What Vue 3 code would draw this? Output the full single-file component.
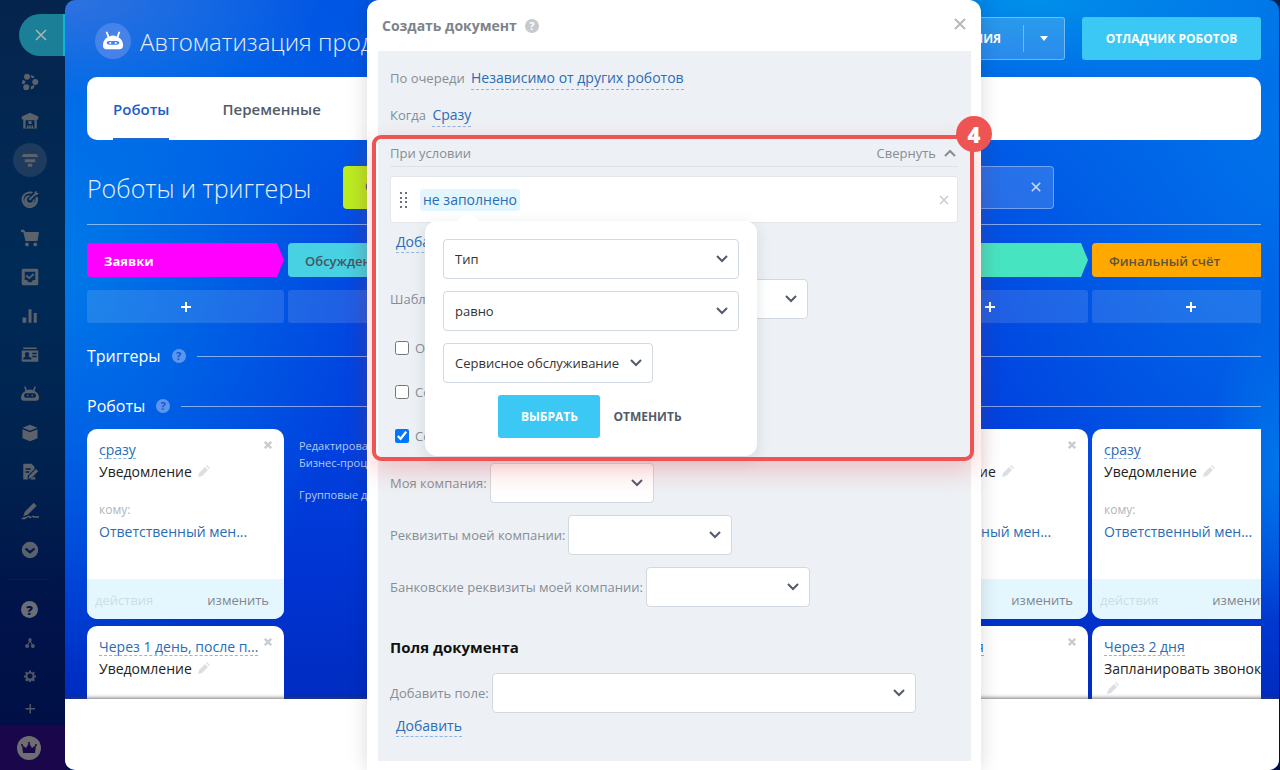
<script setup>
import { ref } from 'vue'

const navItems = [
  { name: 'Сотрудничество', d: 'M8 1a4 4 0 1 1 0 8 4 4 0 0 1 0-8zM19 8a4 4 0 1 1 0 8 4 4 0 0 1 0-8zM7 15a4 4 0 1 1 0 8 4 4 0 0 1 0-8zM3 9l3 2-1 3-3 1-1-3zM13 3l4 1 1 2-3 1-2-2zM13 18l4-2 1 2-2 3-3 1z' },
  { name: 'Магазин', d: 'M12 1l11 5v4h-2v12H3V10H1V6zM6 11v10h2v-3h2v3h1v-3h2v3h1v-3h2v3h2V11zM10 12h4v4h-4z' },
  { name: 'CRM', active: true, d: 'M1 4h22v4H1zM5 11h14v4H5zM9 17h6v4H9z' },
  { name: 'Маркетинг', d: 'M11 2c2 0 3 0 5 1l-2 2a8 8 0 1 0 5 5l3-1a11 11 0 1 1-11-7zM11 7l1 2a4 4 0 1 0 4 4l2-1a7 7 0 1 1-7-5zM10 12l8-7V3l3-2v3h3l-3 3h-2l-7 7z' },
  { name: 'Каталог', d: 'M0 1h4l2 3h18l-2 12H6L3 4H0zM8 18a2 2 0 1 1 0 5 2 2 0 0 1 0-5zM19 18a2 2 0 1 1 0 5 2 2 0 0 1 0-5z' },
  { name: 'Задачи', d: 'M3 1h18q2 0 2 2v18q0 2-2 2H3q-2 0-2-2V3q0-2 2-2zM5 5v11h3l2 3h4l2-3h3V5zM8 9l3 3 5-5 2 2-7 6-5-4z' },
  { name: 'Аналитика', d: 'M2 14h5v7H2zM10 3h4v18h-4zM17 8h4v13h-4z' },
  { name: 'Контакты', d: 'M3 2h18v2H3zM1 6h22v15H1zM8 8q-3 0-3 3l1 3-3 2v2h11v-2l-4-2 1-3q0-3-3-3zM15 9v2h6V9zM15 13v2h6v-2z' },
  { name: 'Роботы', d: 'M4 2h2l2 5q4-2 8 0l2-5h2l-2 6q6 3 6 9 0 4-4 4H4q-4 0-4-4 0-6 6-9zM7 11q-3 0-3 3t3 3h10q3 0 3-3t-3-3zM8 13h2v2H8zM14 13h2v2h-2z' },
  { name: 'Склад', d: 'M12 1l10 4-10 4L2 5zM2 7l10 4 10-4v12l-10 4-10-4z' },
  { name: 'Документы', d: 'M3 1h11l4 4v3l-9 9v5H3zM6 7v2h7V7zM6 11v2h5v-2zM20 8l3 3-9 9-4 1 1-4zM16 19h3v3h-7z' },
  { name: 'Подпись', d: 'M17 1l4 4-12 12-6 2 2-6zM1 21l5-1 5-2 2 2 3-2 2 1h6v2h-7l-2-1-3 2-2-2-5 3H1z' },
  { name: 'Ещё', d: 'M12 1a11 11 0 1 1 0 22 11 11 0 0 1 0-22zM7 9l-2 2 7 6 7-6-2-2-5 4z' }
]

const toolItems = [
  { name: 'Карта сайта', d: 'M12 2a4 4 0 0 1 2 7l3 5a4 4 0 1 1-2 1l-3-5-3 5a4 4 0 1 1-2-1l3-5a4 4 0 0 1 2-7z' },
  { name: 'Настройки', d: 'M10 1h4v3l3 1 2-2 3 3-2 2 1 3h3v4h-3l-1 2 2 3-3 3-3-2-2 1v2h-4v-2l-2-1-3 2-3-3 2-3-1-2H0v-4h3l1-3-2-2 3-3 2 2 3-1zM12 7a5 5 0 1 0 0 10 5 5 0 0 0 0-10z' },
  { name: 'Добавить', d: 'M11 2h3v8h8v3h-8v8h-3v-8H3v-3h8z' }
]

const stages = [
  { title: 'Заявки', color: 'magenta' },
  { title: 'Обсуждение', color: 'cyan' },
  { title: 'Смета', color: 'cyan' },
  { title: 'Договор', color: 'green' },
  { title: 'Оплата', color: 'green' },
  { title: 'Финальный счёт', color: 'orange' }
]

const notice = { when: 'сразу', title: 'Уведомление', to: 'Ответственный мен...' }

const columns = [
  { robots: [notice, { when: 'Через 1 день, после п...', title: 'Уведомление' }] },
  { notes: ['Редактировать', 'Бизнес-процессы', 'Групповые действия'] },
  { robots: [] },
  { robots: [] },
  { robots: [notice, { when: 'Через 2 дня', title: 'Задание' }] },
  { robots: [notice, { when: 'Через 2 дня', title: 'Запланировать звонок' }] }
]

const options = ref([
  { label: 'Обновить документ', checked: false },
  { label: 'Создать ссылку', checked: false },
  { label: 'Собрать в PDF', checked: true }
])

const companyFields = [
  { id: 'company', label: 'Моя компания:' },
  { id: 'requisites', label: 'Реквизиты моей компании:' },
  { id: 'bank', label: 'Банковские реквизиты моей компании:' }
]

const conditionFields = [
  { value: 'Тип', name: 'Поле' },
  { value: 'равно', name: 'Условие' },
  { value: 'Сервисное обслуживание', name: 'Значение', fit: true }
]
</script>

<template>
  <div class="shell">
    <aside class="sidebar">
      <button class="slider-close" aria-label="Закрыть">
        <svg viewBox="0 0 12 12" width="12" height="12"><path d="M1 1l10 10M11 1L1 11" /></svg>
      </button>
      <nav class="nav">
        <a v-for="item in navItems" :key="item.name" href="#" class="nav-item" :class="{ active: item.active }" :aria-label="item.name">
          <svg viewBox="0 0 24 24"><path :d="item.d" /></svg>
        </a>
      </nav>
      <div class="tools">
        <button class="tool help" aria-label="Помощь">?</button>
        <button v-for="tool in toolItems" :key="tool.name" class="tool" :aria-label="tool.name">
          <svg viewBox="0 0 24 24"><path :d="tool.d" /></svg>
        </button>
      </div>
      <div class="premium">
        <svg viewBox="0 0 24 24" width="24" height="24">
          <circle cx="12" cy="12" r="12" />
          <path d="M5 9l4 3 3-5 3 5 4-3-1 8H6z" />
          <g><circle cx="5" cy="9" r="1" /><circle cx="12" cy="7" r="1" /><circle cx="19" cy="9" r="1" /></g>
        </svg>
      </div>
    </aside>

    <main class="main">
      <div class="workspace">
        <header class="header">
          <span class="robot-logo">
            <svg viewBox="0 0 24 24" width="22" height="22">
              <path fill-rule="evenodd" d="M4 2h2l2 5q4-2 8 0l2-5h2l-2 6q5 3 5 9 0 4-4 4H5q-4 0-4-4 0-6 5-9zM8 12q-3 0-3 2t3 2h8q3 0 3-2t-3-2zM8 13h2v2H8zM14 13h2v2h-2z" />
            </svg>
          </span>
          <h1>Автоматизация продаж</h1>
          <div class="split-button">
            <button class="split-main">РЕШЕНИЯ</button>
            <button class="split-caret" aria-label="Открыть меню"><i></i></button>
          </div>
          <button class="debug-button">ОТЛАДЧИК РОБОТОВ</button>
        </header>

        <nav class="tabs">
          <a href="#" class="tab current">Роботы</a>
          <a href="#" class="tab">Переменные</a>
        </nav>

        <div class="toolbar">
          <h2>Роботы и триггеры</h2>
          <button class="create-button">СОЗДАТЬ</button>
          <div class="filter">
            <button aria-label="Сбросить">
              <svg viewBox="0 0 12 12" width="10" height="10"><path d="M1 1l10 10M11 1L1 11" /></svg>
            </button>
          </div>
        </div>

        <div class="board">
          <div class="lane">
            <div v-for="stage in stages" :key="stage.title" class="stage" :class="stage.color">{{ stage.title }}</div>
          </div>
          <div class="lane adders">
            <button v-for="stage in stages" :key="stage.title" class="adder" :aria-label="'Добавить: ' + stage.title">
              <svg viewBox="0 0 10 10" width="10" height="10"><path d="M5 0v10M0 5h10" /></svg>
            </button>
          </div>

          <h3 class="section-title">Триггеры <span class="hint">?</span></h3>
          <h3 class="section-title robots-title">Роботы <span class="hint">?</span></h3>

          <div class="lane">
            <div v-for="(column, i) in columns" :key="i" class="column">
              <ul v-if="column.notes" class="notes">
                <li v-for="note in column.notes" :key="note">{{ note }}</li>
              </ul>
              <article v-for="robot in column.robots" :key="robot.when" class="robot">
                <button class="robot-remove" aria-label="Удалить">
                  <svg viewBox="0 0 10 10" width="8" height="8"><path d="M1 1l8 8M9 1L1 9" /></svg>
                </button>
                <div class="robot-body">
                  <a href="#" class="robot-when">{{ robot.when }}</a>
                  <p class="robot-title">
                    {{ robot.title }}
                    <svg class="pencil" viewBox="0 0 12 12" width="12" height="12"><path d="M0 12l1-4 6-6 3 3-6 6zM8 1l1-1 3 3-1 1z" /></svg>
                  </p>
                  <template v-if="robot.to">
                    <p class="robot-label">кому:</p>
                    <a href="#" class="robot-to">{{ robot.to }}</a>
                  </template>
                </div>
                <footer v-if="robot.to" class="robot-footer">
                  <span>действия</span>
                  <a href="#">изменить</a>
                </footer>
              </article>
            </div>
          </div>
        </div>
      </div>
      <footer class="bottom-bar"></footer>

      <div class="overlay">
        <section class="dialog">
          <header class="dialog-header">
            <h2>Создать документ</h2>
            <span class="hint gray">?</span>
            <button class="dialog-close" aria-label="Закрыть">
              <svg viewBox="0 0 12 12" width="12" height="12"><path d="M1 1l10 10M11 1L1 11" /></svg>
            </button>
          </header>

          <div class="dialog-body">
            <div class="settings">
              <p class="setting">По очереди <a href="#" class="dashed">Независимо от других роботов</a></p>
              <p class="setting">Когда <a href="#" class="dashed">Сразу</a></p>
            </div>

            <div class="conditions">
              <div class="conditions-head">
                <span>При условии</span>
                <button>
                  Свернуть
                  <svg viewBox="0 0 12 8" width="12" height="8"><path d="M1 7l5-5 5 5" /></svg>
                </button>
              </div>
              <div class="condition">
                <svg class="grip" viewBox="0 0 8 16" width="8" height="16">
                  <path d="M0 0h2v2H0zM5 0h2v2H5zM0 5h2v2H0zM5 5h2v2H5zM0 9h2v2H0zM5 9h2v2H5zM0 14h2v2H0zM5 14h2v2H5z" />
                </svg>
                <a href="#">не заполнено</a>
                <button aria-label="Удалить условие">
                  <svg viewBox="0 0 10 10" width="10" height="10"><path d="M1 1l8 8M9 1L1 9" /></svg>
                </button>
              </div>
              <a href="#" class="dashed add-link">Добавить условие</a>

              <div class="field template-field">
                <label for="template">Шаблон:</label>
                <span class="select wide">
                  <select id="template"><option></option></select>
                  <svg viewBox="0 0 12 8" width="12" height="8"><path d="M1 1l5 5 5-5" /></svg>
                </span>
              </div>

              <div class="options">
                <label v-for="option in options" :key="option.label">
                  <input v-model="option.checked" type="checkbox" />
                  {{ option.label }}
                </label>
              </div>

              <div class="popup">
                <span v-for="field in conditionFields" :key="field.name" class="select" :class="{ fit: field.fit }">
                  <select :aria-label="field.name"><option>{{ field.value }}</option></select>
                  <svg viewBox="0 0 12 8" width="12" height="8"><path d="M1 1l5 5 5-5" /></svg>
                </span>
                <div class="popup-actions">
                  <button class="primary">ВЫБРАТЬ</button>
                  <button class="plain">ОТМЕНИТЬ</button>
                </div>
              </div>

              <div class="frame"></div>
              <span class="step">4</span>
            </div>

            <div class="fields">
              <div v-for="field in companyFields" :key="field.id" class="field">
                <label :for="field.id">{{ field.label }}</label>
                <span class="select short">
                  <select :id="field.id"><option></option></select>
                  <svg viewBox="0 0 12 8" width="12" height="8"><path d="M1 1l5 5 5-5" /></svg>
                </span>
              </div>
              <h3>Поля документа</h3>
              <div class="field new-field">
                <label for="new-field">Добавить поле:</label>
                <span class="select long">
                  <select id="new-field"><option></option></select>
                  <svg viewBox="0 0 12 8" width="12" height="8"><path d="M1 1l5 5 5-5" /></svg>
                </span>
              </div>
              <a href="#" class="dashed add-link">Добавить</a>
            </div>
          </div>
        </section>
      </div>
    </main>
  </div>
</template>

<style>
body {
  margin: 0;
  background: #042650;
}
</style>

<style scoped>
* {
  box-sizing: border-box;
}

.shell {
  display: flex;
  height: 100vh;
  overflow: hidden;
  font-family: 'Open Sans', 'Noto Sans', sans-serif;
  font-size: 14px;
  line-height: 20px;
  background: linear-gradient(180deg, #05244d 0, #002b57 35%, #00224f 60%, #00134a 80%, #000f45 100%);
}

h1, h2, h3, p, ul {
  margin: 0;
  padding: 0;
  list-style: none;
}

a {
  color: #2a6cb5;
  text-decoration: none;
}

button {
  border: 0;
  padding: 0;
  background: none;
  font: inherit;
  color: inherit;
  cursor: pointer;
}

svg {
  display: block;
  flex: none;
}

/* sidebar */
.sidebar {
  display: flex;
  flex-direction: column;
  flex: none;
  width: 65px;
}

.slider-close {
  display: flex;
  align-items: center;
  align-self: flex-end;
  flex: none;
  width: 46px;
  height: 42px;
  margin: 14px 0 6px;
  padding-left: 16px;
  border-right: 2px solid #10b4d4;
  border-radius: 21px 0 0 21px;
  background: #1b7f97;
}

.slider-close path {
  stroke: #a9b5b5;
  stroke-width: 1.5;
}

.nav-item {
  display: flex;
  align-items: center;
  justify-content: center;
  width: 59px;
  height: 39px;
}

.nav-item svg {
  width: 18px;
  height: 18px;
  fill: #5c626b;
  fill-rule: evenodd;
}

.nav-item.active svg {
  width: 34px;
  height: 34px;
  padding: 8px;
  border-radius: 50%;
  background: #1e3a5d;
}

.tools {
  display: flex;
  flex-direction: column;
  align-items: center;
  width: 41px;
  margin: 10px 0 0 9px;
  padding-top: 13px;
  border-top: 1px solid #061d50;
}

.tool {
  display: flex;
  align-items: center;
  justify-content: center;
  height: 33px;
}

.tool svg {
  width: 12px;
  height: 12px;
  fill: #4f5666;
  fill-rule: evenodd;
}

.tool.help {
  width: 17px;
  height: 17px;
  margin: 8px 0;
  border-radius: 50%;
  background: #6b6e75;
  color: #001449;
  font-size: 13px;
  font-weight: 800;
}

.premium {
  display: flex;
  align-items: center;
  flex: none;
  height: 45px;
  margin-top: auto;
  padding-left: 17px;
  background: #1a064b;
}

.premium circle {
  fill: #6e6e70;
}

.premium path,
.premium g circle {
  fill: #1a064b;
}

/* workspace */
.main {
  position: relative;
  display: flex;
  flex-direction: column;
  flex: 1;
  min-width: 0;
  margin-right: 1px;
  overflow: hidden;
  border-radius: 10px;
  background:
    radial-gradient(ellipse 340px 110px at 80% 0, #0090ea, rgba(0, 144, 234, 0)),
    radial-gradient(ellipse 340px 560px at 100% 16%, #0072ea, rgba(0, 114, 234, 0)),
    radial-gradient(ellipse 70px 160px at 100% 60%, #0078e9, rgba(0, 120, 233, 0)),
    radial-gradient(ellipse 260px 100px at 0 0, #2f72df, rgba(47, 114, 223, 0)),
    radial-gradient(ellipse 300px 420px at 0 34%, #0079e8, rgba(0, 121, 232, 0)),
    linear-gradient(180deg, #0056e4 0, #005ae6 15%, #0048e2 34%, #0041df 58%, #0034d2 75%, #002cc0 91%);
}

.workspace {
  flex: 1;
  min-height: 0;
  padding: 0 18px 0 22px;
  overflow: hidden;
}

.bottom-bar {
  position: relative;
  flex: none;
  height: 71px;
  background: #fff;
  box-shadow: 0 -1px 4px rgba(60, 60, 70, 0.7);
}

.header {
  display: flex;
  align-items: center;
  height: 77px;
  padding-left: 8px;
}

.robot-logo {
  display: flex;
  align-items: center;
  justify-content: center;
  width: 36px;
  height: 36px;
  margin-top: 4px;
  border-radius: 50%;
  background: #4583e8;
}

.robot-logo path {
  fill: #fff;
}

.header h1 {
  flex: 1;
  margin: 6px 0 0 9px;
  color: #e6effc;
  font-size: 24px;
  line-height: 32px;
  font-weight: 300;
  white-space: nowrap;
}

.split-button {
  display: flex;
  height: 43px;
  margin-right: 17px;
  border: 1px solid rgba(255, 255, 255, 0.35);
  border-radius: 3px;
  background: rgba(255, 255, 255, 0.16);
  color: #fff;
  font-size: 12px;
  font-weight: 700;
}

.split-main {
  width: 140px;
  margin: 7px 0;
  padding-right: 22px;
  border-right: 1px solid rgba(255, 255, 255, 0.35);
  text-align: right;
}

.split-caret {
  display: flex;
  align-items: center;
  justify-content: center;
  width: 40px;
}

.split-caret i {
  border: 4px solid transparent;
  border-top: 5px solid #fff;
  border-bottom: 0;
}

.debug-button {
  width: 179px;
  height: 43px;
  border-radius: 3px;
  background: #3bc8f5;
  color: #fff;
  font-size: 12px;
  font-weight: 700;
}

.tabs {
  display: flex;
  gap: 53px;
  height: 63px;
  padding: 0 26px;
  border-radius: 10px;
  background: #fff;
}

.tab {
  display: flex;
  align-items: center;
  padding-top: 2px;
  border-bottom: 2px solid transparent;
  color: #525c69;
  font-size: 15px;
  font-weight: 600;
}

.tab.current {
  border-color: #2067d0;
  color: #1e5cc8;
}

.toolbar {
  display: flex;
  align-items: center;
  height: 85px;
  padding-top: 10px;
  border-bottom: 1px solid rgba(255, 255, 255, 0.5);
}

.toolbar h2 {
  width: 256px;
  padding-top: 2px;
  color: #e6effc;
  font-size: 25px;
  line-height: 36px;
  font-weight: 300;
  white-space: nowrap;
}

.create-button {
  width: 150px;
  height: 43px;
  padding-left: 22px;
  border-radius: 4px;
  background: #bbed21;
  color: #535c69;
  font-size: 12px;
  font-weight: 700;
  text-align: left;
}

.filter {
  display: flex;
  justify-content: flex-end;
  flex: 1;
  height: 43px;
  margin: 0 207px 0 12px;
  padding-right: 12px;
  border: 1px solid rgba(255, 255, 255, 0.35);
  border-radius: 4px;
  background: rgba(255, 255, 255, 0.15);
}

.filter path {
  stroke: #bdd4f7;
  stroke-width: 2;
}

.board {
  padding-top: 18px;
}

.lane {
  display: grid;
  grid-auto-flow: column;
  grid-auto-columns: 197px;
  gap: 4px;
  overflow: hidden;
}

.stage {
  height: 34px;
  padding: 0 17px;
  border-radius: 4px;
  clip-path: polygon(0 0, calc(100% - 7px) 0, 100% 50%, calc(100% - 7px) 100%, 0 100%);
  color: #45545f;
  font-size: 13px;
  line-height: 36px;
  font-weight: 600;
}

.stage.magenta {
  background: #ff00ff;
  color: #fff;
  font-weight: 700;
}

.stage.cyan {
  background: #47d1e2;
}

.stage.green {
  background: #47e4c2;
}

.stage.orange {
  background: #ffa900;
  color: #5f553c;
}

.adders {
  margin: 13px 0 21px;
}

.adder {
  display: flex;
  align-items: center;
  justify-content: center;
  height: 33px;
  border-radius: 3px;
  background: rgba(255, 255, 255, 0.12);
}

.adder path {
  stroke: #fff;
  stroke-width: 2;
}

.section-title {
  display: flex;
  align-items: center;
  gap: 11px;
  height: 24px;
  color: #fff;
  font-size: 16px;
  font-weight: 400;
}

.section-title::after {
  content: '';
  flex: 1;
  height: 1px;
  background: rgba(255, 255, 255, 0.5);
}

.robots-title {
  margin: 26px 0 11px;
}

.hint {
  width: 14px;
  height: 14px;
  border-radius: 50%;
  background: #5c95ee;
  color: #1456cf;
  font-size: 11px;
  line-height: 14px;
  font-weight: 700;
  text-align: center;
}

.hint.gray {
  background: #c6cace;
  color: #fff;
}

.column {
  display: flex;
  flex-direction: column;
  gap: 7px;
}

.notes {
  padding: 8px 11px;
  color: #b4c9f8;
  font-size: 11px;
  line-height: 17px;
}

.notes li:last-child {
  margin-top: 15px;
}

.robot {
  position: relative;
  display: flex;
  flex-direction: column;
  height: 190px;
  overflow: hidden;
  border-radius: 10px;
  background: #fff;
}

.robot-body {
  flex: 1;
  padding: 11px 12px;
  font-size: 14px;
}

.robot-when {
  display: inline-block;
  border-bottom: 1px dashed #8fb6e0;
  line-height: 17px;
  white-space: nowrap;
}

.robot-title {
  margin-top: 2px;
  color: #222;
  line-height: 20px;
}

.pencil {
  display: inline-block;
  margin-left: 3px;
  fill: #dcdfe1;
}

.robot-label {
  margin-top: 18px;
  color: #b0b5bd;
  font-size: 12px;
}

.robot-to {
  line-height: 24px;
  white-space: nowrap;
}

.robot-remove {
  position: absolute;
  top: 12px;
  right: 12px;
}

.robot-remove path {
  stroke: #c8cdd1;
  stroke-width: 3;
}

.robot-footer {
  display: flex;
  align-items: center;
  justify-content: space-between;
  height: 40px;
  padding: 2px 15px 0 8px;
  background: #e5f7fe;
  color: #ccdde3;
  font-size: 13px;
}

.robot-footer a {
  color: #80868e;
}

/* dialog */
.overlay {
  position: absolute;
  inset: 0;
  display: flex;
  justify-content: center;
  padding-left: 4px;
}

.dialog {
  width: 614px;
  border-radius: 12px 12px 0 0;
  background: #fff;
  box-shadow: 0 0 20px rgba(0, 0, 0, 0.15);
}

.dialog-header {
  display: flex;
  align-items: center;
  gap: 8px;
  height: 51px;
  padding: 0 15px;
}

.dialog-header h2 {
  color: #7d838b;
  font-size: 14px;
  font-weight: 700;
}

.dialog-close {
  margin: 0 0 4px auto;
}

.dialog-close path {
  stroke: #b5babf;
  stroke-width: 2;
}

.dialog-body {
  margin: 0 10px 0 11px;
  padding-bottom: 24px;
  background: #edf1f5;
}

.settings {
  height: 84px;
  padding: 16px 12px 0;
}

.setting {
  margin-bottom: 14px;
  color: #868d95;
  font-size: 13px;
  line-height: 22px;
}

.dashed {
  display: inline-block;
  border-bottom: 1px dashed #8fb6e0;
  font-size: 14px;
}

.setting .dashed {
  margin-left: 3px;
}

.conditions {
  position: relative;
  height: 326px;
  padding: 8px 13px 0 12px;
}

.conditions-head {
  display: flex;
  justify-content: space-between;
  height: 24px;
  border-bottom: 1px solid #dfe3e7;
  color: #868d95;
  font-size: 13px;
}

.conditions-head button {
  display: flex;
  align-items: center;
  gap: 8px;
  height: 20px;
  padding-right: 2px;
}

.conditions-head path {
  fill: none;
  stroke: #868d95;
  stroke-width: 2;
}

.condition {
  display: flex;
  align-items: center;
  height: 47px;
  margin-top: 9px;
  padding: 0 8px 0 9px;
  border: 1px solid #e3e7ea;
  border-radius: 3px;
  background: #fff;
}

.grip {
  fill: #69717c;
}

.condition a {
  margin-left: 12px;
  padding: 0 3px;
  border-radius: 3px;
  background: #e3f6fe;
  line-height: 22px;
}

.condition button {
  margin-left: auto;
}

.condition button path {
  stroke: #c6cbd0;
  stroke-width: 1.5;
}

.add-link {
  margin: 8px 0 0 6px;
  line-height: 21px;
}

.field {
  display: flex;
  align-items: center;
  gap: 3px;
  height: 40px;
  margin-bottom: 12px;
  color: #868d95;
  font-size: 13px;
}

.template-field {
  margin: 26px 0 19px;
}

.select {
  display: grid;
  align-items: center;
  height: 40px;
}

.select select,
.select svg {
  grid-area: 1 / 1;
}

.select select {
  width: 100%;
  height: 100%;
  padding: 0 32px 0 11px;
  border: 1px solid #d2d8df;
  border-radius: 4px;
  appearance: none;
  background: #fff;
  color: #333;
  font: inherit;
  font-size: 13px;
}

.select svg {
  justify-self: end;
  margin-right: 11px;
  pointer-events: none;
}

.select path {
  fill: none;
  stroke: #525c69;
  stroke-width: 2;
}

.wide {
  width: 360px;
}

.short {
  width: 164px;
}

.long {
  width: 424px;
}

.options {
  display: flex;
  flex-direction: column;
  gap: 24px;
  color: #868d95;
  font-size: 13px;
}

.options label {
  display: flex;
  align-items: center;
  gap: 6px;
  padding-left: 5px;
}

.options input {
  width: 14px;
  height: 14px;
  margin: 0;
}

.popup {
  position: absolute;
  top: 86px;
  left: 47px;
  display: flex;
  flex-direction: column;
  gap: 12px;
  width: 332px;
  padding: 18px;
  border-radius: 12px;
  background: #fff;
  box-shadow: 0 4px 14px rgba(80, 100, 120, 0.18);
}

.popup::before {
  content: '';
  position: absolute;
  top: -7px;
  left: 35px;
  width: 16px;
  height: 16px;
  background: #fff;
  transform: rotate(45deg);
}

.select.fit {
  align-self: flex-start;
}

.popup-actions {
  display: flex;
  justify-content: center;
  gap: 13px;
  height: 43px;
  padding-right: 2px;
  color: #525c69;
  font-size: 12px;
  font-weight: 700;
}

.primary {
  width: 102px;
  border-radius: 3px;
  background: #3bc8f5;
  color: #fff;
}

.frame {
  position: absolute;
  inset: 0 -3px 0 -6px;
  border: 4px solid #ef5455;
  border-radius: 9px;
  box-shadow: 0 10px 26px rgba(239, 84, 85, 0.3);
  pointer-events: none;
}

.step {
  position: absolute;
  top: -19px;
  right: -21px;
  width: 36px;
  height: 36px;
  border-radius: 50%;
  background: #ef5455;
  color: #fff;
  font-size: 22px;
  line-height: 36px;
  font-weight: 800;
  text-align: center;
}

.fields {
  padding: 2px 12px 0;
}

.fields h3 {
  margin: 30px 0 16px;
  color: #111;
  font-size: 15px;
  font-weight: 700;
}

.field.new-field {
  margin-bottom: 2px;
}

.fields .add-link {
  margin-top: 0;
}
</style>
